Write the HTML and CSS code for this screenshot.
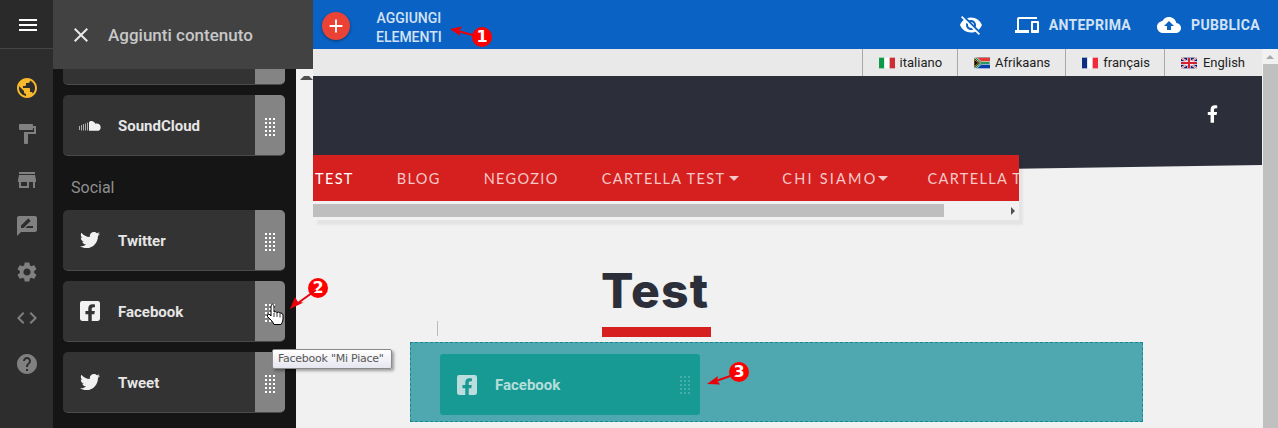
FILE: index.html
```html
<!DOCTYPE html>
<html lang="it">
<head>
<meta charset="utf-8">
<title>Aggiunti contenuto</title>
<link rel="stylesheet" href="styles.css">
</head>
<body>
<svg class="defs" width="0" height="0" aria-hidden="true">
  <symbol id="tw" viewBox="0 0 512 512"><path d="M459.37 151.716c.325 4.548.325 9.097.325 13.645 0 138.72-105.583 298.558-298.558 298.558-59.452 0-114.68-17.219-161.137-47.106 8.447.974 16.568 1.299 25.34 1.299 49.055 0 94.213-16.568 130.274-44.832-46.132-.975-84.792-31.188-98.112-72.772 6.498.974 12.995 1.624 19.818 1.624 9.421 0 18.843-1.3 27.614-3.573-48.081-9.747-84.143-51.98-84.143-102.985v-1.299c13.969 7.797 30.214 12.67 47.431 13.319-28.264-18.843-46.781-51.005-46.781-87.391 0-19.492 5.197-37.36 14.294-52.954 51.655 63.675 129.3 105.258 216.365 109.807-1.624-7.797-2.599-15.918-2.599-24.04 0-57.828 46.782-104.934 104.934-104.934 30.213 0 57.502 12.67 76.67 33.137 23.715-4.548 46.456-13.32 66.599-25.34-7.798 24.366-24.366 44.833-46.132 57.827 21.117-2.273 41.584-8.122 60.426-16.243-14.292 20.791-32.161 39.308-52.628 54.253z"/></symbol>
  <symbol id="fb" viewBox="0 32 448 448"><path d="M400 32H48A48 48 0 0 0 0 80v352a48 48 0 0 0 48 48h137.25V327.69h-63V256h63v-54.64c0-62.15 37-96.48 93.67-96.48 27.14 0 55.52 4.84 55.52 4.84v61h-31.27c-30.81 0-40.42 19.12-40.42 38.73V256h68.78l-11 71.69h-57.78V480H400a48 48 0 0 0 48-48V80a48 48 0 0 0-48-48z"/></symbol>
</svg>
<div class="app">
  <nav class="rail">
    <div class="rail-top"><svg class="ic24 white" viewBox="0 0 24 24"><path d="M3 18h18v-2H3v2zm0-5h18v-2H3v2zm0-7v2h18V6H3z"/></svg></div>
    <div class="rail-icons">
      <svg class="rail-ic gold" viewBox="0 0 24 24"><path d="M12 2C6.48 2 2 6.48 2 12s4.48 10 10 10 10-4.48 10-10S17.52 2 12 2zm-1 17.93c-3.95-.49-7-3.85-7-7.93 0-.62.08-1.21.21-1.79L9 15v1c0 1.1.9 2 2 2v1.93zm6.9-2.54c-.26-.81-1-1.39-1.9-1.39h-1v-3c0-.55-.45-1-1-1H8v-2h2c.55 0 1-.45 1-1V7h2c1.1 0 2-.9 2-2v-.41c2.93 1.19 5 4.06 5 7.41 0 2.08-.8 3.97-2.1 5.39z"/></svg>
      <svg class="rail-ic" viewBox="0 0 24 24"><path d="M18 4V3c0-.55-.45-1-1-1H5c-.55 0-1 .45-1 1v4c0 .55.45 1 1 1h12c.55 0 1-.45 1-1V6h1v4H9v11c0 .55.45 1 1 1h2c.55 0 1-.45 1-1v-9h8V4h-3z"/></svg>
      <svg class="rail-ic" viewBox="0 0 24 24"><path d="M20 4H4v2h16V4zm1 10v-2l-1-5H4l-1 5v2h1v6h10v-6h4v6h2v-6h1zm-9 4H6v-4h6v4z"/></svg>
      <svg class="rail-ic" viewBox="0 0 24 24"><path d="M20 2H4c-1.1 0-2 .9-2 2v18l4-4h14c1.1 0 2-.9 2-2V4c0-1.1-.9-2-2-2zM6 14v-2.47l6.88-6.88c.2-.2.51-.2.71 0l1.77 1.77c.2.2.2.51 0 .71L8.47 14H6zm12 0h-7.5l2-2H18v2z"/></svg>
      <svg class="rail-ic" viewBox="0 0 24 24"><path d="M19.14 12.94c.04-.3.06-.61.06-.94 0-.32-.02-.64-.07-.94l2.03-1.58c.18-.14.23-.41.12-.61l-1.92-3.32c-.12-.22-.37-.29-.59-.22l-2.39.96c-.5-.38-1.03-.7-1.62-.94l-.36-2.54c-.04-.24-.24-.41-.48-.41h-3.84c-.24 0-.43.17-.47.41l-.36 2.54c-.59.24-1.13.57-1.62.94l-2.39-.96c-.22-.08-.47 0-.59.22L2.74 8.87c-.12.21-.08.47.12.61l2.03 1.58c-.05.3-.09.63-.09.94s.02.64.07.94l-2.03 1.58c-.18.14-.23.41-.12.61l1.92 3.32c.12.22.37.29.59.22l2.39-.96c.5.38 1.03.7 1.62.94l.36 2.54c.05.24.24.41.48.41h3.84c.24 0 .44-.17.47-.41l.36-2.54c.59-.24 1.13-.56 1.62-.94l2.39.96c.22.08.47 0 .59-.22l1.92-3.32c.12-.22.07-.47-.12-.61l-2.01-1.58zM12 15.6c-1.98 0-3.6-1.62-3.6-3.6s1.62-3.6 3.6-3.6 3.6 1.62 3.6 3.6-1.62 3.6-3.6 3.6z"/></svg>
      <svg class="rail-ic" viewBox="0 0 24 24"><path d="M9.4 16.6L4.8 12l4.6-4.6L8 6l-6 6 6 6 1.4-1.4zm5.2 0l4.6-4.6-4.6-4.6L16 6l6 6-6 6-1.4-1.4z"/></svg>
      <svg class="rail-ic" viewBox="0 0 24 24"><path d="M12 2C6.48 2 2 6.48 2 12s4.48 10 10 10 10-4.48 10-10S17.52 2 12 2zm1 17h-2v-2h2v2zm2.07-7.75l-.9.92C13.45 12.9 13 13.5 13 15h-2v-.5c0-1.1.45-2.1 1.17-2.83l1.24-1.26c.37-.36.59-.86.59-1.41 0-1.1-.9-2-2-2s-2 .9-2 2H8c0-2.21 1.79-4 4-4s4 1.79 4 4c0 .88-.36 1.68-.93 2.25z"/></svg>
    </div>
  </nav>

  <aside class="panel">
    <div class="card"><span class="handle"><i class="dots"></i></span></div>
    <div class="card">
      <svg class="card-ic sc" viewBox="0 0 22 10"><path opacity=".65" d="M0 5h1v4H0zM2 4h1v5.500H2zM4 3h1v6.500H4zM6 2.500h1v7H6zM8 1.500h1v8H8z"/><path d="M10 9.800V1.300C11-.4 15-.6 16.300 2.800c2.700-.9 5.400 1 5.400 3.600 0 2-1.500 3.400-3.400 3.400z"/></svg>
      <span class="card-name">SoundCloud</span>
      <span class="handle"><i class="dots"></i></span>
    </div>
    <div class="group">Social</div>
    <div class="card">
      <svg class="card-ic"><use href="#tw"/></svg>
      <span class="card-name">Twitter</span>
      <span class="handle"><i class="dots"></i></span>
    </div>
    <div class="card">
      <svg class="card-ic"><use href="#fb"/></svg>
      <span class="card-name">Facebook</span>
      <span class="handle"><i class="dots"></i></span>
    </div>
    <div class="card">
      <svg class="card-ic"><use href="#tw"/></svg>
      <span class="card-name">Tweet</span>
      <span class="handle"><i class="dots"></i></span>
    </div>
  </aside>

  <main class="work">
    <header class="topbar">
      <button class="add" type="button"><svg viewBox="0 0 24 24"><path d="M19 13h-6v6h-2v-6H5v-2h6V5h2v6h6v2z"/></svg></button>
      <span class="add-label">AGGIUNGI<br>ELEMENTI</span>
      <div class="actions">
        <svg class="act-eye" viewBox="0 0 24 24"><path d="M12 7c2.760 0 5 2.240 5 5 0 .65-.13 1.260-.36 1.830l2.920 2.920c1.510-1.260 2.700-2.890 3.430-4.750-1.730-4.390-6-7.500-11-7.500-1.400 0-2.740.25-3.980.7l2.160 2.160C10.740 7.130 11.350 7 12 7zM2 4.270l2.280 2.280.46.46C3.080 8.300 1.780 10.020 1 12c1.730 4.390 6 7.500 11 7.500 1.550 0 3.030-.3 4.380-.84l.42.42L19.730 22 21 20.730 3.270 3 2 4.270zM7.530 9.800l1.550 1.550c-.05.21-.08.43-.08.65 0 1.660 1.340 3 3 3 .22 0 .44-.03.65-.08l1.550 1.550c-.67.33-1.410.53-2.200.53-2.760 0-5-2.240-5-5 0-.79.2-1.530.53-2.200zm4.310-.78l3.150 3.150.02-.16c0-1.660-1.340-3-3-3l-.17.01z"/></svg>
        <span class="act">
          <svg viewBox="0 0 24 24"><path d="M4 6h18V4H4c-1.100 0-2 .9-2 2v11H0v3h14v-3H4V6zm19 2h-6c-.55 0-1 .45-1 1v10c0 .55.45 1 1 1h6c.55 0 1-.45 1-1V9c0-.55-.45-1-1-1zm-1 9h-4v-7h4v7z"/></svg>
          ANTEPRIMA
        </span>
        <span class="act">
          <svg viewBox="0 0 24 24"><path d="M19.350 10.040C18.670 6.590 15.640 4 12 4 9.110 4 6.600 5.640 5.350 8.040 2.340 8.360 0 10.910 0 14c0 3.310 2.690 6 6 6h13c2.760 0 5-2.240 5-5 0-2.640-2.050-4.780-4.650-4.960zM14 13v4h-4v-4H7l5-5 5 5h-3z"/></svg>
          PUBBLICA
        </span>
      </div>
    </header>

    <div class="stage">
      <div class="strip"><i class="arrow-up dark"></i></div>
      <div class="page">
        <div class="langs">
          <span class="lang"><svg class="flag" viewBox="0 0 3 2"><rect width="1" height="2" fill="#0f9b4a"/><rect x="1" width="1" height="2" fill="#fff"/><rect x="2" width="1" height="2" fill="#cf2b37"/></svg>italiano</span>
          <span class="lang"><svg class="flag" viewBox="0 0 24 16"><rect width="24" height="16" fill="#0b3fa8"/><rect width="24" height="8" fill="#e03c31"/><path d="M0 0l10 8L0 16z" fill="#111"/><path d="M0 0h4l7 6h13v4H11l-7 6H0l10-8z" fill="#0b8a4b" stroke="#fff" stroke-width="1"/><path d="M0 2.500L7 8l-7 5.500z" fill="#111" stroke="#f6b81a" stroke-width="1"/></svg>Afrikaans</span>
          <span class="lang fr"><svg class="flag" viewBox="0 0 3 2"><rect width="1" height="2" fill="#0c2f86"/><rect x="1" width="1" height="2" fill="#fff"/><rect x="2" width="1" height="2" fill="#ef2b3c"/></svg>français</span>
          <span class="lang en"><svg class="flag" viewBox="0 0 24 16"><rect width="24" height="16" fill="#0a1c6b"/><path d="M0 0l24 16M24 0L0 16" stroke="#fff" stroke-width="3"/><path d="M0 0l24 16M24 0L0 16" stroke="#d61f2f" stroke-width="1"/><path d="M12 0v16M0 8h24" stroke="#fff" stroke-width="5"/><path d="M12 0v16M0 8h24" stroke="#d61f2f" stroke-width="3"/></svg>English</span>
        </div>

        <section class="hero">
          <svg class="hero-f" viewBox="0 0 320 512"><path d="M279.140 288l14.220-92.660h-88.910v-60.130c0-25.350 12.420-50.060 52.240-50.060h40.420V6.260S260.430 0 225.360 0c-73.220 0-121.080 44.380-121.080 124.720v70.620H22.890V288h81.390v224h100.170V288z"/></svg>
          <div class="menu-box">
            <ul class="menu">
              <li class="on">TEST</li>
              <li>BLOG</li>
              <li>NEGOZIO</li>
              <li class="drop">CARTELLA TEST</li>
              <li class="drop wide">CHI SIAMO</li>
              <li class="last">CARTELLA TEST</li>
            </ul>
            <div class="hscroll"><i class="hthumb"></i><i class="arrow-right"></i></div>
          </div>
        </section>

        <section class="content">
          <h1 class="title">Test</h1>
          <div class="title-bar"></div>
          <div class="dropzone">
            <div class="dropped">
              <svg class="card-ic tint"><use href="#fb"/></svg>
              <span class="dropped-name">Facebook</span>
              <i class="dots faint"></i>
            </div>
          </div>
          <i class="caret"></i>
        </section>
      </div>
      <div class="vscroll"><i class="arrow-up"></i><i class="vthumb"></i></div>
    </div>
  </main>

  <div class="panel-head">
    <svg viewBox="0 0 24 24"><path d="M19 6.410L17.590 5 12 10.590 6.410 5 5 6.410 10.590 12 5 17.590 6.410 19 12 13.410 17.590 19 19 17.590 13.410 12z"/></svg>
    <span>Aggiunti contenuto</span>
  </div>

  <div class="tooltip">Facebook "Mi Piace"</div>

  <svg class="cursor" viewBox="0 0 18 22"><path d="M5 2.500Q6.500 0 8 2.500V9Q9.500 8 11 9.500 12.500 8.500 14 10 16.500 9.500 17 12V16Q17 19 15 21.500H8Q7 19 5 17L1.500 13.500Q1 11 3 11L5 13z" fill="#fff" stroke="#000"/><path d="M8 10v4M11 10v4M14 10.500v4" stroke="#000" stroke-width=".8" fill="none"/></svg>

  <span class="mark m1">1</span>
  <span class="mark m2">2</span>
  <span class="mark m3">3</span>
  <svg class="arrow a1" viewBox="0 0 30 14"><path d="M25 9.500L9 5" stroke="#e8000b" stroke-width="2" fill="none"/><path d="M1 3l12-2.500-3 4.500 1.500 5z" fill="#e8000b"/></svg>
  <svg class="arrow a2" viewBox="0 0 30 24"><path d="M27 2L9 15" stroke="#e8000b" stroke-width="2" fill="none"/><path d="M1 21l5-12 3 5 5.500.5z" fill="#e8000b"/></svg>
  <svg class="arrow a3" viewBox="0 0 32 16"><path d="M30 3L10 10" stroke="#e8000b" stroke-width="2" fill="none"/><path d="M1 13l11-8-1 5 3.500 3.500z" fill="#e8000b"/></svg>
</div>
</body>
</html>
```
FILE: styles.css
```css
* { box-sizing: border-box; }
html, body { margin: 0; padding: 0; height: 100%; overflow: hidden; }
body { font-family: Roboto, "Liberation Sans", sans-serif; background: #f1f1f1; }
.defs { position: absolute; }
i { display: block; }

.app { position: relative; display: flex; width: 1278px; height: 428px; overflow: hidden; }

/* left rail */
.rail { flex: 0 0 53px; background: #2d2d2d; }
.rail-top { height: 49px; display: flex; align-items: center; justify-content: center; padding: 2px 0 0 2px; background: #2a2a2a; border-bottom: 1px solid #454545; }
.ic24 { width: 24px; height: 24px; }
.white { fill: #fff; }
.rail-icons { display: flex; flex-direction: column; align-items: center; gap: 22px; padding-top: 27px; }
.rail-ic { width: 24px; height: 24px; fill: #808080; flex: none; }
.gold { fill: #f7b82b; }

/* panel */
.panel { flex: 0 0 243px; background: #151515; padding: 24px 11px 0 10px; display: flex; flex-direction: column; gap: 10px; }
.card { flex: 0 0 61px; display: flex; align-items: center; padding-left: 17px; background: #333; border-radius: 5px; overflow: hidden; border-bottom: 1px solid #4a4a4a; }
.card-ic { width: 20px; height: 20px; fill: #f1f1f1; flex: none; }
.sc { width: 22px; height: 10px; margin: 1px -1px 0; }
.card-name { margin: 2px 0 0 18px; font-size: 15px; font-weight: 700; color: #e6e6e6; }
.handle { margin-left: auto; flex: 0 0 30px; align-self: stretch; margin-bottom: -1px; padding-top: 3px; background: #848484; display: flex; align-items: center; justify-content: center; }
.dots { width: 10px; height: 18px; background: linear-gradient(90deg, #fff 2px, transparent 2px) 0 0 / 4px 4px; -webkit-mask: linear-gradient(#000 2px, transparent 2px) 0 0 / 4px 4px; mask: linear-gradient(#000 2px, transparent 2px) 0 0 / 4px 4px; }
.group { flex: 0 0 34px; padding: 13px 0 0 8px; font-size: 16px; line-height: 18px; color: #8f8f8f; }

.panel-head { position: absolute; left: 53px; top: 0; width: 260px; height: 69px; display: flex; align-items: center; padding-left: 16px; background: #424242; color: #c8c8c8; font-size: 17px; font-weight: 500; }
.panel-head svg { width: 24px; height: 24px; fill: #e8e8e8; margin-right: 15px; }

/* main */
.work { flex: 1; min-width: 0; display: flex; flex-direction: column; }
.topbar { flex: 0 0 49px; display: flex; align-items: center; padding-left: 26px; background: #0a62c4; color: #d4e2f5; }
.add { width: 28px; height: 28px; margin-top: 3px; padding: 0; border: 0; border-radius: 50%; background: #ea4335; box-shadow: 0 1px 3px rgba(0,0,0,.4); display: flex; align-items: center; justify-content: center; }
.add svg { width: 22px; height: 22px; fill: #fff; }
.add-label { margin: 6px 0 0 26px; font-size: 14px; font-weight: 500; line-height: 19px; text-align: center; }
.actions { margin-left: auto; display: flex; align-items: center; padding-right: 18px; gap: 26px; font-size: 14px; font-weight: 700; letter-spacing: .32px; }
.act-eye { width: 24px; height: 24px; fill: #fff; margin-right: 6px; }
.act { display: flex; align-items: center; gap: 10px; }
.act svg { width: 24px; height: 24px; fill: #fff; }

.stage { flex: 1; min-height: 0; display: flex; }
.strip { flex: 0 0 17px; background: #f1f1f1; padding: 27px 0 0 4px; }
.page { flex: 1; min-width: 0; display: flex; flex-direction: column; background: #f1f1f1; }

.langs { flex: 0 0 27px; display: flex; justify-content: flex-end; background: #e9e9e9; }
.lang { display: flex; align-items: center; padding: 0 15px 0 16px; border-left: 1px solid #a9a9a9; font: 13px/1 Roboto, sans-serif; color: #222; }
.lang.fr { padding-right: 14px; }
.lang.en { padding-right: 17px; }
.lang.en .flag { margin-right: 6px; }
.flag { width: 16px; height: 12px; margin-right: 5px; }

.hero { position: relative; flex: 0 0 142px; padding-top: 79px; }
.hero::before { content: ""; position: absolute; inset: 0 0 auto 0; height: 103px; background: #2c2f3a; clip-path: polygon(0 0, 100% 0, 100% 89px, 0 103px); }
.hero-f { position: absolute; left: 894px; top: 29px; width: 11px; height: 18px; fill: #fff; }
.menu-box { position: relative; width: 706px; box-shadow: 4px 5px 2px rgba(0,0,0,.05); }
.menu { display: flex; margin: 0; padding: 2px 0 0 2px; list-style: none; height: 46px; align-items: center; background: #d61f1f; overflow: hidden; gap: 43px; font: 400 14.500px/1 Lato, "Open Sans", sans-serif; letter-spacing: 1.35px; color: #f7c9c9; white-space: nowrap; }
.menu .on { color: #fff; }
.menu .wide { letter-spacing: 2.200px; }
.menu .wide::after { margin-left: 0; }
.menu .last { margin-left: -3px; }
.drop::after { content: ""; display: inline-block; margin-left: 4px; vertical-align: 3px; border: 5px solid transparent; border-top-color: #f7c9c9; border-bottom: 0; }
.hscroll { display: flex; align-items: center; height: 17px; margin-top: 2px; padding-bottom: 2px; background: #f1f1f1; position: relative; }
.hthumb { width: 631px; height: 13px; background: #bebebe; }
.arrow-right { margin-left: auto; margin-right: 4px; border: 4px solid transparent; border-left: 4px solid #505050; border-right: 0; }

.content { position: relative; flex: 1; display: flex; flex-direction: column; min-height: 0; }
.title { margin: 38px 0 4px 288px; font: 800 48px/65px Inter, "Open Sans", sans-serif; letter-spacing: 1.2px; color: #2c2f3a; }
.title-bar { width: 109px; height: 10px; margin: 0 0 0 289px; background: #d61f1f; flex: none; }
.dropzone { flex: none; width: 733px; height: 80px; margin: 5px 0 0 97px; padding: 11px 0 0 29px; background: #4fa8b0; border: 1px dashed #138a92; }
.dropped { width: 260px; height: 61px; display: flex; align-items: center; padding-left: 17px; background: #189a94; border-radius: 3px; }
.tint { fill: #bcdcdd; }
.dropped-name { margin: 1px 0 0 18px; font-size: 15px; font-weight: 700; color: #b5dedb; }
.faint { margin-left: auto; margin-right: 10px; opacity: .2; }
.caret { position: absolute; left: 124px; top: 101px; width: 1px; height: 15px; background: #bbb; }

.vscroll { flex: 0 0 16px; display: flex; flex-direction: column; align-items: center; background: #f1f1f1; padding-top: 6px; }
.vthumb { flex: 1; width: 15px; margin: 5px 0 0 1px; background: #c0c0c0; }
.arrow-up { border: 4px solid transparent; border-bottom: 4px solid #a8a8a8; border-top: 0; }
.arrow-up.dark { border-bottom-color: #505050; }

/* overlays */
.tooltip { position: absolute; left: 272px; top: 349px; width: 120px; height: 20px; padding-left: 5px; background: linear-gradient(#fff, #e6e6f0); border: 1px solid #8a8a8a; border-radius: 2px; box-shadow: 2px 2px 3px rgba(0,0,0,.35); font: 11px/18px "DejaVu Sans", sans-serif; letter-spacing: -.25px; color: #575757; white-space: nowrap; }
.cursor { position: absolute; left: 266px; top: 303px; width: 18px; height: 22px; }
.mark { position: absolute; width: 20px; height: 20px; border-radius: 50%; background: #f00; color: #fff; font: 700 16px/20px "DejaVu Sans", sans-serif; text-align: center; }
.m1 { left: 472px; top: 27px; }
.m2 { left: 308px; top: 278px; }
.m3 { left: 729px; top: 362px; }
.arrow { position: absolute; }
.a1 { left: 449px; top: 26px; width: 30px; height: 14px; }
.a2 { left: 289px; top: 288px; width: 30px; height: 24px; }
.a3 { left: 706px; top: 371px; width: 32px; height: 16px; }
```
